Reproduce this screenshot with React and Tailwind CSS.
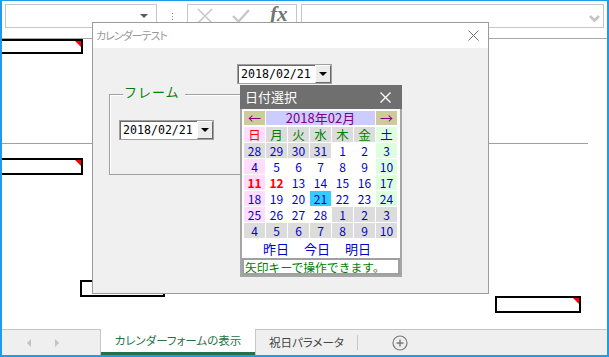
import React from 'react';

const JP = "font-['Noto_Sans_CJK_JP',sans-serif]";

const weeks = [
  [[28, 'o'], [29, 'o'], [30, 'o'], [31, 'o'], [1], [2], [3]],
  [[4], [5], [6], [7], [8], [9], [10]],
  [[11, 'h'], [12, 'h'], [13], [14], [15], [16], [17]],
  [[18], [19], [20], [21, 's'], [22], [23], [24]],
  [[25], [26], [27], [28], [1, 'o'], [2, 'o'], [3, 'o']],
  [[4, 'o'], [5, 'o'], [6, 'o'], [7, 'o'], [8, 'o'], [9, 'o'], [10, 'o']],
];

function cellClass(flag, col) {
  if (flag === 'o') return 'bg-[#dcdcdc] text-[#0000cc]';
  if (flag === 's') return 'bg-[#33ccff] text-[#0000cc]';
  if (flag === 'h') return col === 0 ? 'bg-[#ffddff] text-[#ff0000] font-bold' : 'bg-white text-[#ff0000] font-bold';
  if (col === 0) return 'bg-[#ffddff] text-[#0000cc]';
  if (col === 6) return 'bg-[#ddffdd] text-[#0000cc]';
  return 'bg-white text-[#0000cc]';
}

function Marker() {
  return <div className="absolute right-0 top-0 w-0 h-0 border-t-[6px] border-l-[6px] border-t-[#ff0000] border-l-transparent" />;
}

function Combo({ className }) {
  return (
    <div className={`absolute w-[95px] h-[20px] border border-[#a0a0a0] bg-white flex ${className}`}>
      <div className="flex-1 border-t border-l border-[#696969] flex items-center pl-[2px] font-['DejaVu_Sans_Mono',monospace] text-[11.6px] text-black leading-none">
        2018/02/21
      </div>
      <div className="w-[16px] border-t border-l border-white border-r border-b border-r-[#696969] border-b-[#696969] bg-[#ececec] flex items-center justify-center">
        <div className="w-0 h-0 border-l-[4px] border-r-[4px] border-t-[4px] border-l-transparent border-r-transparent border-t-black" />
      </div>
    </div>
  );
}

function Calendar() {
  return (
    <div className={`absolute left-[147px] top-[37px] w-[162px] ${JP}`}>
      <div className="h-[24px] bg-[#6f6f6f] flex items-center justify-between pl-[5px] pr-[11px] text-white text-[13px]">
        <span>日付選択</span>
        <svg width="11" height="11" viewBox="0 0 11 11">
          <path d="M0.5 0.5 L10.5 10.5 M10.5 0.5 L0.5 10.5" stroke="#fff" strokeWidth="1.3" />
        </svg>
      </div>
      <div className="border-2 border-t-0 border-[#a5a5a5] bg-white">
        <div className="px-[2px] pt-[2px]">
          <div className="flex gap-px h-[14px] text-[#800080] text-[13px] leading-[14px]">
            <div className="w-[21px] bg-[#cccc99] flex items-center justify-center">←</div>
            <div className="w-[109px] bg-[#ccccff] flex items-center justify-center">2018年02月</div>
            <div className="w-[21px] bg-[#cccc99] flex items-center justify-center">→</div>
          </div>
          <div className="grid grid-cols-[repeat(7,21px)] gap-px mt-[2px] text-[12.5px] leading-[15px]">
            <div className="h-[15px] bg-[#ffddff] text-[#ff0000] flex items-center justify-center">日</div>
            {['月', '火', '水', '木', '金'].map((d) => (
              <div key={d} className="h-[15px] bg-[#dcdcdc] text-[#008000] flex items-center justify-center">{d}</div>
            ))}
            <div className="h-[15px] bg-[#ddffdd] text-[#0000ff] flex items-center justify-center">土</div>
            {weeks.map((w, r) =>
              w.map(([n, flag], c) => (
                <div key={`${r}-${c}`} className={`h-[15px] flex items-center justify-center text-[12px] leading-[15px] ${cellClass(flag, c)}`}>
                  {n}
                </div>
              ))
            )}
          </div>
        </div>
        <div className="h-[20px] flex items-center pl-[21px] gap-[15px] text-[13px] text-[#0000cc] leading-none">
          <span>昨日</span>
          <span>今日</span>
          <span>明日</span>
        </div>
        <div className="h-[17px] border-2 border-[#a0a0a0] flex items-center pl-[1px] text-[11.8px] text-[#008000] leading-none whitespace-nowrap overflow-hidden">
          矢印キーで操作できます。
        </div>
      </div>
    </div>
  );
}

export default function App() {
  return (
    <div className={`relative w-[609px] h-[357px] bg-white border-[#1e9be9] border-l-2 border-r-2 border-t border-b-2 flex flex-col overflow-hidden ${JP}`}>
      {/* formula bar */}
      <div className="h-[37px] shrink-0 flex items-start pt-[3px] pl-[3px]">
        <div className="w-[152px] h-[24px] border border-[#c6c6c6] flex items-center justify-end pr-[8px]">
          <div className="w-0 h-0 border-l-[4px] border-r-[4px] border-t-[4px] border-l-transparent border-r-transparent border-t-[#595959]" />
        </div>
        <div className="w-[30px] h-[24px] flex flex-col items-center justify-center gap-[2px]">
          <div className="w-px h-px bg-[#8c8c8c]" />
          <div className="w-px h-px bg-[#8c8c8c]" />
          <div className="w-px h-px bg-[#8c8c8c]" />
        </div>
        <div className="w-[110px] h-[24px] border border-[#c6c6c6] flex items-center pl-[9px]">
          <svg width="16" height="16" viewBox="0 0 16 16">
            <path d="M1 1 L15 15 M15 1 L1 15" stroke="#c8c8c8" strokeWidth="1.6" />
          </svg>
          <svg width="18" height="14" viewBox="0 0 18 14" className="ml-[19px]">
            <path d="M1 7 L6.5 12.5 L17 1" stroke="#c8c8c8" strokeWidth="2.4" fill="none" />
          </svg>
          <span className="ml-[20px] font-['Liberation_Serif',serif] italic font-bold text-[21px] leading-none text-[#737373] -mt-[3px]">fx</span>
        </div>
        <div className="w-[303px] h-[24px] ml-[4px] border border-[#c6c6c6] flex items-end justify-end pr-[3px] pb-[5px]">
          <svg width="11" height="7" viewBox="0 0 11 7">
            <path d="M1 1 L5.5 5.5 L10 1" stroke="#c4c4c4" strokeWidth="2.6" fill="none" />
          </svg>
        </div>
      </div>

      {/* sheet */}
      <div className="relative flex-1 border-t border-[#a8a8a8]">
        <div className="absolute left-[-4px] top-0 w-[85px] h-[15px] border-2 border-black">
          <Marker />
        </div>
        <div className="absolute left-0 top-[104px] w-[586px] h-px bg-[#a0a0a0]" />
        <div className="absolute left-[-4px] top-[119px] w-[85px] h-[17px] border-2 border-black">
          <Marker />
        </div>
        <div className="absolute left-[78px] top-[241px] w-[85px] h-[17px] border-2 border-black" />
        <div className="absolute left-[493px] top-[257px] w-[86px] h-[17px] border-2 border-black">
          <Marker />
        </div>
      </div>

      {/* sheet tabs */}
      <div className="h-[26px] shrink-0 border-t border-[#c6c6c6] bg-[#efefef] flex items-stretch text-[11px] [font-feature-settings:'palt']">
        <div className="w-[98px] flex items-center pl-[25px] gap-[24px]">
          <div className="w-0 h-0 border-t-[4px] border-b-[4px] border-r-[4px] border-t-transparent border-b-transparent border-r-[#c2c2c2]" />
          <div className="w-0 h-0 border-t-[4px] border-b-[4px] border-l-[4px] border-t-transparent border-b-transparent border-l-[#c2c2c2]" />
        </div>
        <div className="w-[156px] -mt-px bg-white border-l border-r border-[#c6c6c6] flex flex-col">
          <div className="flex-1 flex items-center justify-center text-[#217346] text-[11.5px]">カレンダーフォームの表示</div>
          <div className="h-[3px] bg-[#217346]" />
        </div>
        <div className="w-[101px] flex items-center justify-center text-[#444] text-[11.5px]">祝日パラメータ</div>
        <div className="w-px my-[5px] bg-[#c6c6c6]" />
        <div className="w-[83px] flex items-center justify-center">
          <svg width="16" height="16" viewBox="0 0 16 16">
            <circle cx="8" cy="8" r="7" stroke="#7a7a7a" strokeWidth="1.2" fill="none" />
            <path d="M8 4.5 V11.5 M4.5 8 H11.5" stroke="#7a7a7a" strokeWidth="1.4" />
          </svg>
        </div>
      </div>

      {/* dialog */}
      <div className="absolute left-[90px] top-[21px] w-[397px] h-[272px] border border-[#9c9c9c] flex flex-col">
        <div className="h-[25px] shrink-0 bg-white flex items-center justify-between pl-[3px] pr-[9px]">
          <span className="text-[11px] tracking-[-1px] text-[#9a9a9a] [font-feature-settings:'palt']">カレンダーテスト</span>
          <svg width="11" height="11" viewBox="0 0 11 11">
            <path d="M0.5 0.5 L10.5 10.5 M10.5 0.5 L0.5 10.5" stroke="#707070" strokeWidth="1" />
          </svg>
        </div>
        <div className="relative flex-1 bg-[#f0f0f0]">
          <Combo className="left-[144px] top-[16px]" />
          <div className="absolute left-[16px] top-[46px] w-[272px] h-[81px] border border-[#a0a0a0] shadow-[inset_1px_1px_0_#fff]">
            <div className="absolute left-[13px] top-[-10px] bg-[#f0f0f0] pl-px pr-[5px] text-[13px] text-[#008000] tracking-[1px] leading-none">フレーム</div>
          </div>
          <Combo className="left-[26px] top-[72px]" />
          <Calendar />
        </div>
      </div>
    </div>
  );
}
